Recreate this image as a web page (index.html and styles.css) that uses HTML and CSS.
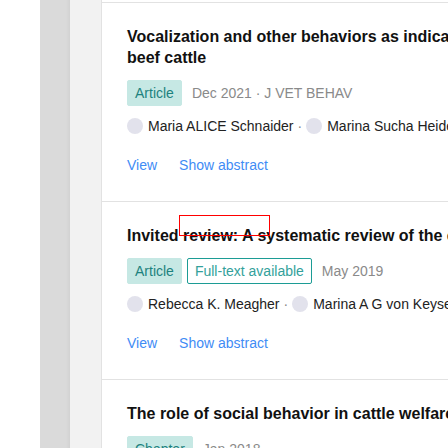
FILE: index.html
```html
<!DOCTYPE html>
<html>
<head>
<meta charset="utf-8">
<link rel="stylesheet" href="styles.css">
</head>
<body>
<div class="page">
  <div class="gutter"></div>
  <div class="rail"></div>
  <div class="sidebar"></div>
  <main class="main">
    <ul class="list">
      <li class="item">
        <h3 class="title">Vocalization and other behaviors as indicators of emotional valence: The case of cow-to-calf separation and reunion in<br>beef cattle</h3>
        <div class="meta">
          <span class="badge">Article</span>
          <span class="date">Dec 2021 · J VET BEHAV</span>
        </div>
        <div class="authors">
          <span class="author"><span class="avatar"></span>Maria ALICE Schnaider</span><span class="sep">·</span><span class="author"><span class="avatar"></span>Marina Sucha Heidemann</span><span class="sep">·</span><span class="author"><span class="avatar"></span>Carla Forte Maiolino Molento</span>
        </div>
        <div class="actions">
          <a class="link">View</a>
          <a class="link">Show abstract</a>
        </div>
      </li>
      <li class="item">
        <h3 class="title">Invited review: A systematic review of the effects of prolonged cow–calf contact on behavior, welfare, and productivity</h3>
        <span class="mark"></span>
        <div class="meta">
          <span class="badge">Article</span>
          <span class="badge outline">Full-text available</span>
          <span class="date">May 2019</span>
        </div>
        <div class="authors">
          <span class="author"><span class="avatar"></span>Rebecca K. Meagher</span><span class="sep">·</span><span class="author"><span class="avatar"></span>Marina A G von Keyserlingk</span><span class="sep">·</span><span class="author"><span class="avatar"></span>Daniel M Weary</span>
        </div>
        <div class="actions">
          <a class="link">View</a>
          <a class="link">Show abstract</a>
        </div>
      </li>
      <li class="item">
        <h3 class="title">The role of social behavior in cattle welfare</h3>
        <div class="meta">
          <span class="badge">Chapter</span>
          <span class="date">Jan 2018</span>
        </div>
      </li>
    </ul>
  </main>
</div>
</body>
</html>
```

FILE: styles.css
```css
html, body {
  margin: 0;
  padding: 0;
  overflow: hidden;
  background: #fff;
}
body {
  font-family: "Liberation Sans", Arial, sans-serif;
  font-size: 14px;
  color: #222;
}
.page {
  display: flex;
  width: 1400px;
  min-height: 448px;
}
.gutter {
  flex: none;
  width: 40px;
  background: #fff;
}
.rail {
  flex: none;
  width: 30px;
  background: linear-gradient(to right, #dadada 0, #dadada 26px, #d2d2d2 30px);
}
.sidebar {
  flex: none;
  width: 31px;
  background: #f2f2f2;
}
.main {
  flex: none;
  width: 1200px;
  border-left: 1px solid #e2e2e2;
  background: #fff;
}
.list {
  list-style: none;
  margin: 0;
  padding: 2px 0 0;
}
.item {
  position: relative;
  border-top: 1px solid #e2e2e2;
  padding: 23px 25px 26px;
}
.title {
  margin: 0;
  font-size: 16px;
  line-height: 21px;
  font-weight: bold;
  color: #111;
  white-space: nowrap;
}
.mark {
  position: absolute;
  left: 77px;
  top: 13px;
  width: 91px;
  height: 21px;
  box-sizing: border-box;
  border: 1px solid #ff0000;
}
.meta {
  display: flex;
  align-items: center;
  margin-top: 12px;
}
.badge {
  display: inline-block;
  padding: 3px 7px;
  line-height: 18px;
  border: 1px solid #c6e8e4;
  background: #c6e8e4;
  color: #1d827e;
  border-radius: 2px;
  margin-right: 5px;
  white-space: nowrap;
}
.badge.outline {
  background: #fff;
  border-color: #1c9c95;
  color: #33a19b;
}
.date {
  margin-left: 5px;
  color: #8a8a8a;
  white-space: nowrap;
}
.authors {
  margin-top: 10px;
  line-height: 20px;
  white-space: nowrap;
  color: #222;
}
.author {
  display: inline-flex;
  align-items: center;
  vertical-align: top;
}
.avatar {
  display: inline-block;
  width: 16px;
  height: 16px;
  border-radius: 50%;
  background: #e2e2ec;
  margin-right: 5px;
}
.sep {
  display: inline-block;
  color: #888;
  margin: 0 4px;
}
.actions {
  display: flex;
  gap: 22px;
  margin-top: 19px;
  line-height: 20px;
}
.link {
  color: #3f8cf5;
  cursor: pointer;
}
```
